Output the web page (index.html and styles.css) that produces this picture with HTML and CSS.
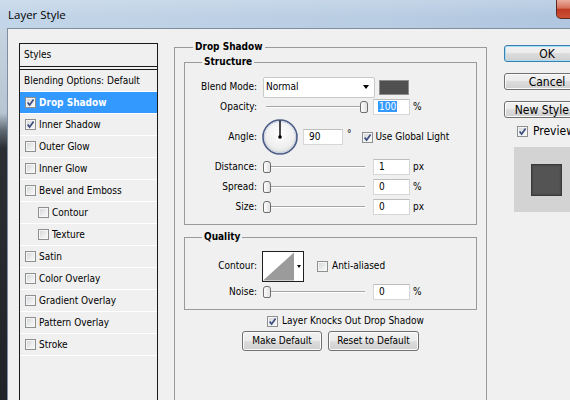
FILE: index.html
```
<!DOCTYPE html>
<html>
<head>
<meta charset="utf-8">
<title>Layer Style</title>
<link rel="stylesheet" href="styles.css">
</head>
<body>
<div class="win">
  <div class="titlebar"><span class="title">Layer Style</span><span class="close"></span></div>
  <div class="frame">
    <div class="frame-left"></div>
    <div class="client">
      <div class="styles-panel">
        <div class="styles-head">Styles</div>
        <ul class="styles-list">
          <li class="plain">Blending Options: Default</li>
          <li class="sel"><span class="cb"><svg class="chk" viewBox="0 0 9 9"><path d="M1.6 4.4 3.6 7 7.6 1.4"/></svg></span>Drop Shadow</li>
          <li><span class="cb"><svg class="chk" viewBox="0 0 9 9"><path d="M1.6 4.4 3.6 7 7.6 1.4"/></svg></span>Inner Shadow</li>
          <li><span class="cb"></span>Outer Glow</li>
          <li><span class="cb"></span>Inner Glow</li>
          <li><span class="cb"></span>Bevel and Emboss</li>
          <li class="sub"><span class="cb"></span>Contour</li>
          <li class="sub"><span class="cb"></span>Texture</li>
          <li><span class="cb"></span>Satin</li>
          <li><span class="cb"></span>Color Overlay</li>
          <li><span class="cb"></span>Gradient Overlay</li>
          <li><span class="cb"></span>Pattern Overlay</li>
          <li><span class="cb"></span>Stroke</li>
        </ul>
      </div>

      <div class="main">
        <fieldset class="grp outer">
          <legend>Drop Shadow</legend>
          <fieldset class="grp inner structure">
            <legend>Structure</legend>
            <div class="row">
              <span class="lbl">Blend Mode:</span>
              <div class="select"><span>Normal</span><span class="arrow"></span></div>
              <span class="swatch"></span>
            </div>
            <div class="row">
              <span class="lbl">Opacity:</span>
              <div class="slider"><div class="track"></div><div class="thumb end"></div></div>
              <span class="input"><span class="hl">100</span></span>
              <span class="unit">%</span>
            </div>
            <div class="row angle">
              <span class="lbl">Angle:</span>
              <svg class="dial" viewBox="0 0 36 36">
                <defs>
                  <radialGradient id="dg" cx="50%" cy="40%" r="60%">
                    <stop offset="0" stop-color="#ffffff"/>
                    <stop offset="0.7" stop-color="#efefef"/>
                    <stop offset="1" stop-color="#d9d9d9"/>
                  </radialGradient>
                </defs>
                <circle cx="18" cy="18" r="17" fill="url(#dg)" stroke="#4b5b87" stroke-width="1.6"/>
                <circle cx="18" cy="18" r="15.6" fill="none" stroke="#c9d0e0" stroke-width="1"/>
                <line x1="18" y1="18" x2="18" y2="1.5" stroke="#000" stroke-width="1.4"/>
                <circle cx="18" cy="18" r="1.8" fill="#000"/>
              </svg>
              <span class="input wide">90</span>
              <span class="deg">°</span>
              <span class="cb gl"><svg class="chk" viewBox="0 0 9 9"><path d="M1.6 4.4 3.6 7 7.6 1.4"/></svg></span>
              <span>Use Global Light</span>
            </div>
            <div class="row">
              <span class="lbl">Distance:</span>
              <div class="slider"><div class="track"></div><div class="thumb"></div></div>
              <span class="input">1</span>
              <span class="unit">px</span>
            </div>
            <div class="row">
              <span class="lbl">Spread:</span>
              <div class="slider"><div class="track"></div><div class="thumb"></div></div>
              <span class="input">0</span>
              <span class="unit">%</span>
            </div>
            <div class="row">
              <span class="lbl">Size:</span>
              <div class="slider"><div class="track"></div><div class="thumb"></div></div>
              <span class="input">0</span>
              <span class="unit">px</span>
            </div>
          </fieldset>

          <fieldset class="grp inner quality">
            <legend>Quality</legend>
            <div class="row contour-row">
              <span class="lbl">Contour:</span>
              <div class="contour">
                <svg class="cprev" viewBox="0 0 31 28"><rect width="31" height="28" fill="#fff"/><polygon points="0,28 31,0 31,28" fill="#9b9b9b"/></svg>
                <span class="carrow-box"><span class="carrow"></span></span>
              </div>
              <span class="cb aa"></span>
              <span>Anti-aliased</span>
            </div>
            <div class="row">
              <span class="lbl">Noise:</span>
              <div class="slider"><div class="track"></div><div class="thumb"></div></div>
              <span class="input">0</span>
              <span class="unit">%</span>
            </div>
          </fieldset>

          <div class="knock"><span class="cb"><svg class="chk" viewBox="0 0 9 9"><path d="M1.6 4.4 3.6 7 7.6 1.4"/></svg></span><span>Layer Knocks Out Drop Shadow</span></div>
          <div class="btnrow">
            <span class="btn mk">Make Default</span>
            <span class="btn rs">Reset to Default</span>
          </div>
        </fieldset>
      </div>

      <div class="side">
        <span class="btn sbtn ok">OK</span>
        <span class="btn sbtn">Cancel</span>
        <span class="btn sbtn ns">New Style...</span>
        <div class="prev-row"><span class="cb"><svg class="chk" viewBox="0 0 9 9"><path d="M1.6 4.4 3.6 7 7.6 1.4"/></svg></span><span>Preview</span></div>
        <div class="prev-box"><span class="prev-sq"></span></div>
      </div>
    </div>
  </div>
</div>
</body>
</html>
```

FILE: styles.css
```
html, body {
  margin: 0;
  padding: 0;
  overflow: hidden;
}
body {
  width: 570px;
  height: 400px;
  background: #1d2024;
  font-family: "DejaVu Sans Condensed", "DejaVu Sans", sans-serif;
  font-stretch: condensed;
  font-size: 10px;
  line-height: 12px;
  color: #000;
}
.win {
  width: 620px;
  height: 400px;
  display: flex;
  flex-direction: column;
}
.titlebar {
  height: 28px;
  flex: none;
  display: flex;
  align-items: flex-start;
  background: linear-gradient(to bottom, rgba(255,255,255,0.18), rgba(255,255,255,0) 60%),
              linear-gradient(to right, #c3d5e8, #b9cde3 60%, #aec5de);
}
.title {
  font-family: "Open Sans", sans-serif;
  font-stretch: normal;
  font-size: 11.5px;
  line-height: 16px;
  margin: 7px 0 0 8px;
}
.close {
  margin-left: auto;
  margin-right: 21px;
  width: 43px;
  height: 19px;
  box-sizing: border-box;
  border: 1px solid #5b2a22;
  border-top: none;
  border-radius: 0 0 5px 5px;
  background: linear-gradient(#e9ad9f, #d66f59 45%, #c03a22 52%, #cd5236);
}
.frame {
  flex: 1;
  display: flex;
  min-height: 0;
}
.frame-left {
  width: 7px;
  flex: none;
  background: linear-gradient(to bottom, #c6d4e2 0, #b7c5d3 85px, #5d6670 103px, #2b2f34 120px, #202327 100%);
}
.client {
  flex: 1;
  background: #f0f0f0;
  border-left: 1px solid #7e8fa1;
  border-top: 1px solid #7e8fa1;
  display: flex;
  align-items: flex-start;
  padding: 12px 0 0 11px;
  overflow: hidden;
}

/* styles list */
.styles-panel {
  width: 139px;
  height: 357px;
  box-sizing: border-box;
  margin-top: 2px;
  border: 1px solid #1a1a1a;
  border-bottom: none;
  flex: none;
}
.styles-head {
  height: 22px;
  line-height: 22px;
  padding-left: 4px;
  border-bottom: 1px solid #1a1a1a;
}
.styles-list {
  list-style: none;
  margin: 2px 0 0;
  padding: 0;
  border-top: 1px solid #1a1a1a;
}
.styles-list li {
  height: 21px;
  border-bottom: 1px solid #fff;
  display: flex;
  align-items: center;
  padding-left: 5px;
}
.styles-list li.plain { padding-left: 4px; }
.styles-list li.sub { padding-left: 18px; }
.styles-list li.sel {
  background: #3399ff;
  color: #fff;
  font-weight: bold;
}
.styles-list .cb { margin-right: 3px; }

/* checkbox */
.cb {
  width: 11px;
  height: 11px;
  box-sizing: border-box;
  border: 1px solid #8e8f8f;
  background: linear-gradient(135deg, #cfd2d7 0%, #eeeeee 60%, #f9f9f9 100%);
  box-shadow: inset 0 0 0 1px #f6f6f6;
  flex: none;
  display: inline-flex;
}
.chk {
  width: 9px;
  height: 9px;
  display: block;
}
.chk path {
  fill: none;
  stroke: #3d4f80;
  stroke-width: 1.7;
}

/* main */
.main {
  width: 313px;
  flex: none;
  margin-left: 16px;
}
fieldset.grp {
  margin: 0;
  min-width: 0;
  border: 1px solid #9a9a9a;
}
fieldset.grp legend {
  padding: 0 2px;
  font-weight: bold;
  line-height: 12px;
}
fieldset.outer {
  padding: 3px 9px 0;
  border-bottom: none;
  height: 359px;
  box-sizing: border-box;
}
fieldset.outer > legend { margin-left: 9px; }
fieldset.inner > legend { margin-left: 17px; }
fieldset.structure { padding: 9px 0 7px; }
fieldset.quality { padding: 7px 0 7px; margin-top: 6px; }

.row {
  display: flex;
  align-items: center;
  height: 20px;
}
.row.angle { height: 40px; }
.row.contour-row { height: 32px; }
.lbl {
  width: 72px;
  flex: none;
  text-align: right;
  margin-right: 5px;
}
.select {
  width: 112px;
  height: 21px;
  box-sizing: border-box;
  margin-left: 1px;
  border: 1px solid #c9c9c9;
  border-radius: 2px;
  background: #fff;
  display: flex;
  align-items: center;
  padding-left: 2px;
  flex: none;
}
.select .arrow {
  margin-left: auto;
  margin-right: 5px;
  width: 0;
  height: 0;
  border-left: 3.5px solid transparent;
  border-right: 3.5px solid transparent;
  border-top: 4px solid #000;
}
.swatch {
  width: 30px;
  height: 15px;
  box-sizing: border-box;
  margin-left: 4px;
  background: #505050;
  border: 1px solid #8d8d8d;
  flex: none;
}
.slider {
  position: relative;
  width: 107px;
  height: 14px;
  flex: none;
  display: flex;
  align-items: center;
  margin-right: 4px;
}
.track {
  flex: 1;
  margin: 0 4px;
  border-top: 1px solid #a5a5a5;
  border-bottom: 1px solid #ffffff;
}
.thumb {
  position: absolute;
  top: 1px;
  left: 1px;
  width: 8px;
  height: 12px;
  box-sizing: border-box;
  border: 1px solid #6f6f6f;
  border-radius: 3px 3px 2px 2px;
  background: linear-gradient(to right, #fdfdfd, #e2e2e2);
}
.thumb.end { left: auto; right: 1px; }
.input {
  width: 37px;
  height: 16px;
  box-sizing: border-box;
  flex: none;
  border: 1px solid #d6d6d6;
  border-top-color: #bdbdbd;
  background: #fff;
  padding-left: 5px;
  line-height: 14px;
}
.input.wide {
  width: 40px;
  margin-left: 5px;
}
.hl {
  background: #3399ff;
  color: #fff;
  padding: 0 1px;
  margin-left: -1px;
}
.unit { margin-left: 3px; }
.dial {
  width: 36px;
  height: 36px;
  flex: none;
  display: block;
}
.deg {
  margin-left: 4px;
  margin-top: -6px;
}
.cb.gl { margin-left: 10px; margin-right: 3px; }
.contour {
  width: 42px;
  height: 31px;
  box-sizing: border-box;
  border: 1px solid #1f1f1f;
  display: flex;
  flex: none;
  background: #fff;
}
.cprev {
  width: 31px;
  height: 29px;
  display: block;
}
.carrow-box {
  flex: 1;
  display: flex;
  justify-content: center;
  align-items: center;
}
.carrow {
  width: 0;
  height: 0;
  border-left: 2.5px solid transparent;
  border-right: 2.5px solid transparent;
  border-top: 3px solid #000;
}
.cb.aa { margin-left: 13px; margin-right: 4px; }

.knock {
  height: 18px;
  margin-top: 2px;
  padding-left: 83px;
  display: flex;
  align-items: center;
}
.knock .cb { margin-right: 4px; }
.btnrow {
  display: flex;
  justify-content: center;
  gap: 6px;
  margin-top: 1px;
}
.btn {
  height: 20px;
  box-sizing: border-box;
  border: 1px solid #707070;
  border-radius: 3px;
  background: linear-gradient(#f2f2f2 0%, #ebebeb 50%, #dddddd 50%, #cfcfcf 100%);
  box-shadow: inset 0 0 0 1px #fbfbfb;
  display: flex;
  align-items: center;
  justify-content: center;
  white-space: nowrap;
  flex: none;
}
.btn.mk { width: 80px; }
.btn.rs { width: 91px; }

/* side */
.side {
  width: 86px;
  flex: none;
  margin-left: 17px;
  padding-top: 4px;
  display: flex;
  flex-direction: column;
}
.sbtn {
  width: 86px;
  height: 17px;
  font-size: 12px;
  margin-bottom: 11px;
}
.sbtn.ok {
  border-color: #3c7fb1;
  box-shadow: inset 0 0 0 1px #a7dcf6;
}
.sbtn.ns { margin-bottom: 5px; }
.prev-row {
  height: 16px;
  display: flex;
  align-items: center;
  padding-left: 13px;
  font-size: 12px;
}
.prev-row .cb { margin-right: 5px; }
.prev-box {
  margin-top: 8px;
  margin-left: 10px;
  width: 65px;
  height: 65px;
  background: #d3d3d3;
  display: flex;
  align-items: center;
  justify-content: center;
}
.prev-sq {
  width: 31px;
  height: 32px;
  box-sizing: border-box;
  background: #545454;
  border: 1px solid #3a3a3a;
  box-shadow: inset 0 0 2px #2e2e2e;
}
```
